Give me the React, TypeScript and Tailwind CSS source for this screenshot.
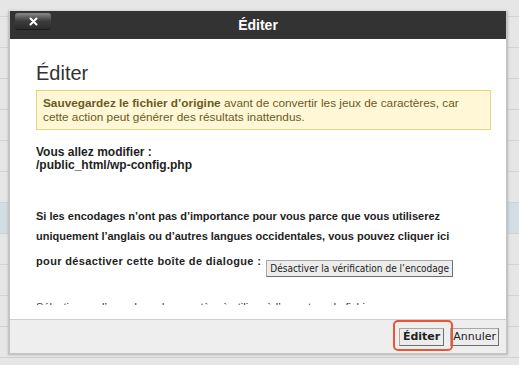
export default function App() {
  const rows = Array.from({ length: 12 });
  return (
    <div className="relative h-[365px] w-[519px] overflow-hidden bg-[#e6e6e6] font-['Liberation_Sans',Arial,sans-serif]">
      {/* background table rows */}
      <div className="flex flex-col pt-[16px]">
        {rows.map((_, i) => (
          <div
            key={i}
            className={`h-[31px] border-t border-[#d2d2d2] ${i === 6 ? "bg-[#d3dde4]" : ""}`}
          />
        ))}
      </div>

      {/* dialog */}
      <div className="absolute left-[8px] top-[11px] flex w-[500px] flex-col border-x-2 border-b-2 border-[#c4c4c4] shadow-[0_0_3px_rgba(0,0,0,0.15)]">
        <div className="relative flex h-[28px] items-center justify-center bg-[#333333]">
          <button className="absolute left-[5px] top-[2px] flex h-[16px] w-[36px] items-center justify-center rounded-[3px] bg-gradient-to-b from-[#8a8a8a] via-[#3d3d3d] to-[#2c2c2c] shadow-[0_1px_0_#1a1a1a]">
            <svg width="9" height="9" viewBox="0 0 9 9">
              <path d="M1.5 1.5 L7.5 7.5 M7.5 1.5 L1.5 7.5" stroke="#fff" strokeWidth="2" strokeLinecap="round" />
            </svg>
          </button>
          <span className="text-[14px] font-bold text-white">Éditer</span>
        </div>

        <div className="h-[280px] bg-white pl-[26px] pr-[15px] pt-[22px]">
          <div className="h-[244px] overflow-hidden">
            <h2 className="text-[20px] leading-[24px] text-[#333]">Éditer</h2>
            <div className="mt-[5px] border border-[#e6d77a] bg-[#fff7d5] px-[6px] py-[5px] text-[11.8px] leading-[14px] text-[#6b5a26]">
              <b>Sauvegardez le fichier d’origine</b> avant de convertir les jeux de caractères, car cette action peut générer des résultats inattendus.
            </div>
            <div className="mt-[16px] text-[12px] font-bold leading-[13px] text-[#1e1e1e]">
              <div>Vous allez modifier :</div>
              <div>/public_html/wp-config.php</div>
            </div>
            <p className="mt-[34px] pr-[10px] text-[11px] font-bold leading-[20px] text-[#1e1e1e]">
              Si les encodages n’ont pas d’importance pour vous parce que vous utiliserez uniquement l’anglais ou d’autres langues occidentales, vous pouvez cliquer ici
            </p>
            <div className="mt-[8px] flex items-start gap-[5px] whitespace-nowrap text-[11px] font-bold leading-[14px] text-[#1e1e1e]">
              <span className="tracking-[0.35px]">pour désactiver cette boîte de dialogue :</span>
              <button className="mt-[6px] h-[17px] border border-[#a8a8a8] border-b-[#6e6e6e] border-r-[#6e6e6e] bg-[#ececec] px-[3px] font-['DejaVu_Sans_Condensed','DejaVu_Sans',Verdana,sans-serif] text-[10px] font-normal leading-[15px] text-[#222]">
                Désactiver la vérification de l’encodage
              </button>
            </div>
            <p className="mt-[22px] whitespace-nowrap text-[11px] leading-[16px] text-[#333]">
              Sélectionnez l’encodage de caractère à utiliser à l’ouverture du fichier.
            </p>
          </div>
        </div>

        <div className="flex h-[34px] items-center justify-end gap-[6px] border-t border-[#cfcfcf] bg-[#eeeeee] pr-[7px]">
          <button className="h-[18px] border border-[#a8a8a8] border-b-[#6e6e6e] border-r-[#6e6e6e] bg-[#ececec] px-[3px] font-['DejaVu_Sans',Verdana,sans-serif] text-[11px] font-bold leading-[16px] text-[#222]">
            Éditer
          </button>
          <button className="h-[18px] border border-[#a8a8a8] border-b-[#6e6e6e] border-r-[#6e6e6e] bg-[#ececec] px-[2px] font-['DejaVu_Sans',Verdana,sans-serif] text-[11px] leading-[16px] text-[#222]">
            Annuler
          </button>
        </div>
      </div>

      {/* highlight */}
      <div className="absolute left-[393px] top-[320px] h-[31px] w-[60px] rounded-[5px] border-2 border-[#ea5535]" />
    </div>
  );
}
